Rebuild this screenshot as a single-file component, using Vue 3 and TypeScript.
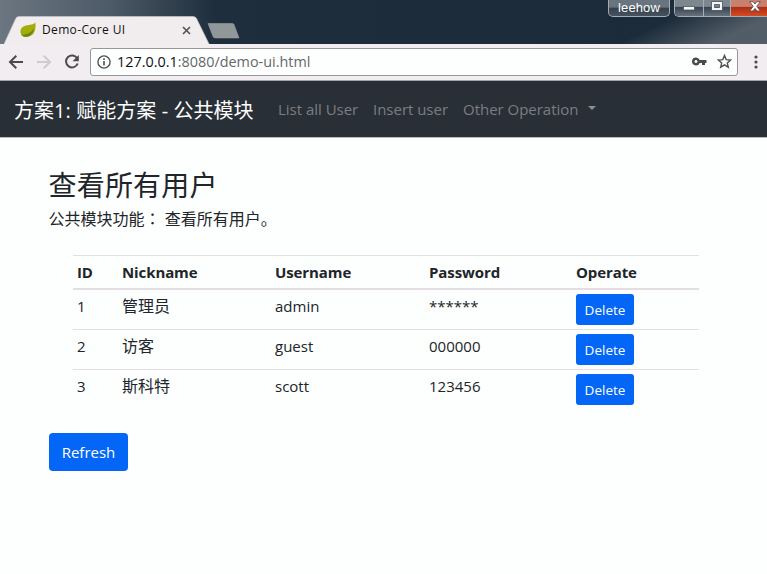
<script setup lang="ts">
interface User {
  id: number
  nickname: string
  username: string
  password: string
}

const columns: string[] = ['ID', 'Nickname', 'Username', 'Password', 'Operate']
const users: User[] = [
  { id: 1, nickname: '管理员', username: 'admin', password: '******' },
  { id: 2, nickname: '访客', username: 'guest', password: '000000' },
  { id: 3, nickname: '斯科特', username: 'scott', password: '123456' },
]
</script>

<template>
  <div class="window">
    <header class="titlebar">
      <div class="tab">
        <svg class="tab-shape" width="206" height="28" viewBox="0 0 206 28">
          <path d="M0 28 L12 2 Q13 .5 15 .5 H189 Q191.500 .5 192.500 2.500 L205 28Z" fill="#f1edef" />
          <path d="M0 28 L12 2 Q13 .5 15 .5 H189 Q191.500 .5 192.500 2.500 L205 28" fill="none" stroke="#c3c6ca" stroke-width=".7" />
        </svg>
        <svg class="leaf" width="16" height="16" viewBox="0 0 16 16">
          <path d="M15.300 .3 C13.500 3 10 2.600 6 3.500 C2 4.400 .2 7 .5 10.500 L1.500 13.500 C5 16 11 15 13.500 11.500 C15.800 8 15.800 4 15.300 .3Z" fill="#a4ad08" />
          <path d="M1.500 12.800 C7 13 11.500 10.500 14 6.500 C13.500 12.500 8 15.800 3.500 14.500Z" fill="#668414" />
        </svg>
        <span class="tab-title">Demo-Core UI</span>
        <svg class="tab-close" width="9" height="9" viewBox="0 0 9 9">
          <path d="M1 1 L8 8 M8 1 L1 8" stroke="#555" stroke-width="1.700" />
        </svg>
      </div>
      <svg class="new-tab" width="33" height="16" viewBox="0 0 33 16">
        <path d="M1 .5 H25 Q26.500 .5 27 1.500 L32 15 H8.500 Q6.500 15 6 13.500Z" fill="#919699" stroke="#a2a6a8" stroke-width=".5" />
      </svg>
      <div class="profile">leehow</div>
      <div class="controls">
        <div class="control minimize">
          <svg width="12" height="5" viewBox="0 0 12 5"><rect x=".5" y=".5" width="11" height="3.500" fill="#f5f6f7" stroke="#444c55" stroke-width=".7" /></svg>
        </div>
        <div class="control maximize">
          <svg width="12" height="10" viewBox="0 0 12 10"><path d="M.5 .5 H11.500 V9.500 H.5Z M3.500 3.500 V6.500 H8.500 V3.500Z" fill="#f5f6f7" fill-rule="evenodd" stroke="#38424d" stroke-width=".7" /></svg>
        </div>
        <div class="control close">
          <svg width="12" height="11" viewBox="0 0 12 11"><path d="M.7 .7 H4 L6 3 L8 .7 H11.300 L7.800 5.300 L11.300 10 H8 L6 7.500 L4 10 H.7 L4.200 5.300Z" fill="#fff" stroke="#52404a" stroke-width=".8" /></svg>
        </div>
      </div>
    </header>

    <div class="toolbar">
      <svg class="nav-icon back" width="16" height="16" viewBox="0 0 16 16">
        <path d="M15 8 H2 M8.300 1.700 L2 8 L8.300 14.300" fill="none" stroke="#4b4b4d" stroke-width="2" />
      </svg>
      <svg class="nav-icon forward" width="16" height="16" viewBox="0 0 16 16">
        <path d="M1 8 H14 M7.700 1.700 L14 8 L7.700 14.300" fill="none" stroke="#ceccce" stroke-width="2" />
      </svg>
      <svg class="nav-icon reload" width="16" height="16" viewBox="0 0 16 16">
        <path d="M13.300 4.500 A6 6 0 1 0 13.700 9.500" fill="none" stroke="#4b4b4d" stroke-width="2" />
        <path d="M14.800 1 V7.300 H8.500Z" fill="#4b4b4d" />
      </svg>
      <div class="address">
        <svg class="info" width="14" height="14" viewBox="0 0 14 14">
          <circle cx="7" cy="7" r="6.100" fill="none" stroke="#505052" stroke-width="1.400" />
          <path d="M7 6 V10.500 M7 3.300 V5" stroke="#505052" stroke-width="1.600" />
        </svg>
        <span class="url"><span class="host">127.0.0.1</span>:8080/demo-ui.html</span>
        <svg class="key" width="15" height="9" viewBox="0 0 15 9">
          <path d="M4 .5 A4 4 0 1 0 7.700 6 H10 V8 H13 V6 H14.500 V3 H7.700 A4 4 0 0 0 4 .5Z M4 3 A1.500 1.500 0 1 1 3.990 3Z" fill="#4b4b4d" fill-rule="evenodd" />
        </svg>
        <svg class="star" width="15" height="15" viewBox="0 0 15 15">
          <path d="M7.500 1.500 L9.200 5.600 L13.600 6 L10.300 8.900 L11.300 13.200 L7.500 10.900 L3.700 13.200 L4.700 8.900 L1.400 6 L5.800 5.600Z" fill="none" stroke="#505052" stroke-width="1.400" />
        </svg>
      </div>
      <svg class="more" width="4" height="14" viewBox="0 0 4 14">
        <circle cx="2" cy="2" r="1.600" fill="#4b4b4d" /><circle cx="2" cy="7" r="1.600" fill="#4b4b4d" /><circle cx="2" cy="12" r="1.600" fill="#4b4b4d" />
      </svg>
    </div>

    <nav class="navbar">
      <span class="brand">方案1: 赋能方案 - 公共模块</span>
      <a class="nav-link link-list">List all User</a>
      <a class="nav-link link-insert">Insert user</a>
      <a class="nav-link link-other">Other Operation</a>
      <i class="caret"></i>
    </nav>

    <main class="content">
      <h1>查看所有用户</h1>
      <p>公共模块功能<span class="colon">：</span> 查看所有用户。</p>
      <table>
        <colgroup>
          <col class="c-id"><col class="c-nick"><col class="c-user"><col class="c-pass"><col>
        </colgroup>
        <thead>
          <tr><th v-for="c in columns" :key="c">{{ c }}</th></tr>
        </thead>
        <tbody>
          <tr v-for="u in users" :key="u.id">
            <td>{{ u.id }}</td>
            <td>{{ u.nickname }}</td>
            <td>{{ u.username }}</td>
            <td>{{ u.password }}</td>
            <td><button class="btn small">Delete</button></td>
          </tr>
        </tbody>
      </table>
      <button class="btn refresh">Refresh</button>
    </main>
  </div>
</template>

<style>
body { margin: 0; background: #fdfefe; }
</style>

<style scoped>
* { box-sizing: border-box; }
svg { display: block; flex: none; }
.window {
  width: 767px;
  height: 574px;
  overflow: hidden;
  background: #fdfefe;
  color: #212529;
  font-family: "Open Sans", "Noto Sans CJK SC", sans-serif;
  font-size: 15px;
}
.titlebar {
  display: flex;
  align-items: flex-start;
  height: 44px;
  background:
    linear-gradient(155deg, transparent 45%, rgba(95, 105, 115, .8) 80%) right / 180px 44px no-repeat,
    linear-gradient(90deg, #6b7680 0, #4d5a67 110px, #1f2e3d 215px, #1b2b3a 620px, #1f2d3a 767px);
}
.tab {
  position: relative;
  display: flex;
  align-items: center;
  flex: none;
  width: 206px;
  height: 28px;
  margin: 16px 0 0 4px;
}
.tab-shape { position: absolute; inset: 0; }
.leaf { position: relative; margin-left: 16px; }
.tab-title {
  position: relative;
  margin-left: 6px;
  width: 138px;
  color: #111;
  font-size: 12px;
  line-height: 16px;
  letter-spacing: .35px;
  white-space: nowrap;
}
.tab-close { position: relative; margin-left: 2px; }
.new-tab { margin: 23px 0 0 -3px; }
.profile {
  flex: none;
  width: 62px;
  height: 17px;
  margin-left: 368px;
  border: 1px solid #a4adb6;
  border-top: 0;
  border-radius: 0 0 5px 5px;
  background: linear-gradient(#69747e 0 45%, #35414d 50%, #46525e);
  color: #fff;
  font: 13px/16px "Liberation Sans", sans-serif;
  text-align: center;
  letter-spacing: .1px;
}
.controls {
  display: flex;
  flex: none;
  width: 93px;
  height: 17px;
  margin-left: 4px;
  border: 1px solid #a4adb6;
  border-width: 0 0 1px 1px;
  border-radius: 0 0 0 5px;
  overflow: hidden;
}
.control {
  display: flex;
  flex: none;
  align-items: flex-start;
  justify-content: center;
  background: linear-gradient(#7d8790 0 40%, #36424e 45%, #65717b);
}
.minimize { width: 29px; padding-top: 6px; border-right: 1px solid #a4adb6; }
.maximize { width: 27px; padding-top: 1px; border-right: 1px solid #a4adb6; }
.close { width: 48px; padding-top: 1px; background: linear-gradient(#ca806e 0 40%, #ad2e10 45%, #d24b25); }
.toolbar {
  display: flex;
  align-items: center;
  height: 37px;
  padding: 0 0 1px 8px;
  background: #f2edf0;
  border-bottom: 1px solid #a4a5a8;
}
.forward { margin-left: 12px; }
.reload { margin-left: 12px; }
.address {
  display: flex;
  align-items: center;
  width: 648px;
  height: 28px;
  margin-left: 10px;
  padding-left: 6px;
  border: 1px solid #97979a;
  border-radius: 3px;
  background: #fdfefe;
}
.url {
  width: 560px;
  margin-left: 6px;
  color: #666769;
  font-size: 14.400px;
  line-height: 20px;
  white-space: nowrap;
}
.host { color: #111; }
.key { margin-left: 15px; }
.star { margin-left: 10px; }
.more { margin-left: 16px; }
.navbar {
  display: flex;
  align-items: center;
  height: 56px;
  padding-left: 14px;
  background: #292f37;
  white-space: nowrap;
}
.brand {
  width: 264px;
  padding-top: 4px;
  color: #fff;
  font-size: 20px;
  letter-spacing: .06px;
  line-height: 30px;
}
.nav-link { color: #7a7d82; line-height: 24px; letter-spacing: -.02px; }
.link-list { width: 95px; }
.link-insert { width: 90px; }
.link-other { width: 125px; }
.caret {
  margin-bottom: 2px;
  border: 4.500px solid transparent;
  border-top-color: #8a8d91;
  border-bottom: 0;
}
.content { padding: 28px 68px 0 48.500px; border-top: 1px solid #b9bbbe; }
h1 { margin: 0; font-size: 28px; font-weight: 400; line-height: 38px; letter-spacing: .2px; }
p { height: 26px; margin: 2px 0 0; font-size: 16px; line-height: 26px; white-space: pre; }
.colon { font-family: "Noto Sans CJK TC", sans-serif; line-height: 1; }
table {
  width: 626px;
  margin: 23px 0 0 24.500px;
  border-collapse: separate;
  border-spacing: 0;
  table-layout: fixed;
}
.c-id { width: 45px; }
.c-nick { width: 153px; }
.c-user { width: 154px; }
.c-pass { width: 147px; }
th, td {
  padding: 4px 4px 0;
  border-top: 1px solid #e5dfe4;
  text-align: left;
  vertical-align: top;
  line-height: 24px;
}
th { height: 35px; border-bottom: 2px solid #e5dde4; font-weight: 700; letter-spacing: -.1px; }
td { height: 40px; }
td:nth-child(2) { font-size: 16px; }
tbody tr:first-child td { border-top: 0; height: 39px; }
.btn {
  display: block;
  border: 0;
  padding: 0;
  border-radius: 4px;
  background: #0366f6;
  color: #fff;
  font-family: inherit;
}
.small { width: 58px; height: 31px; padding-top: 1px; font-size: 13.500px; line-height: 30px; border-radius: 3px; }
.refresh { width: 79px; height: 38px; margin: 24px 0 0 .5px; font-size: 15px; line-height: 38px; }
</style>
